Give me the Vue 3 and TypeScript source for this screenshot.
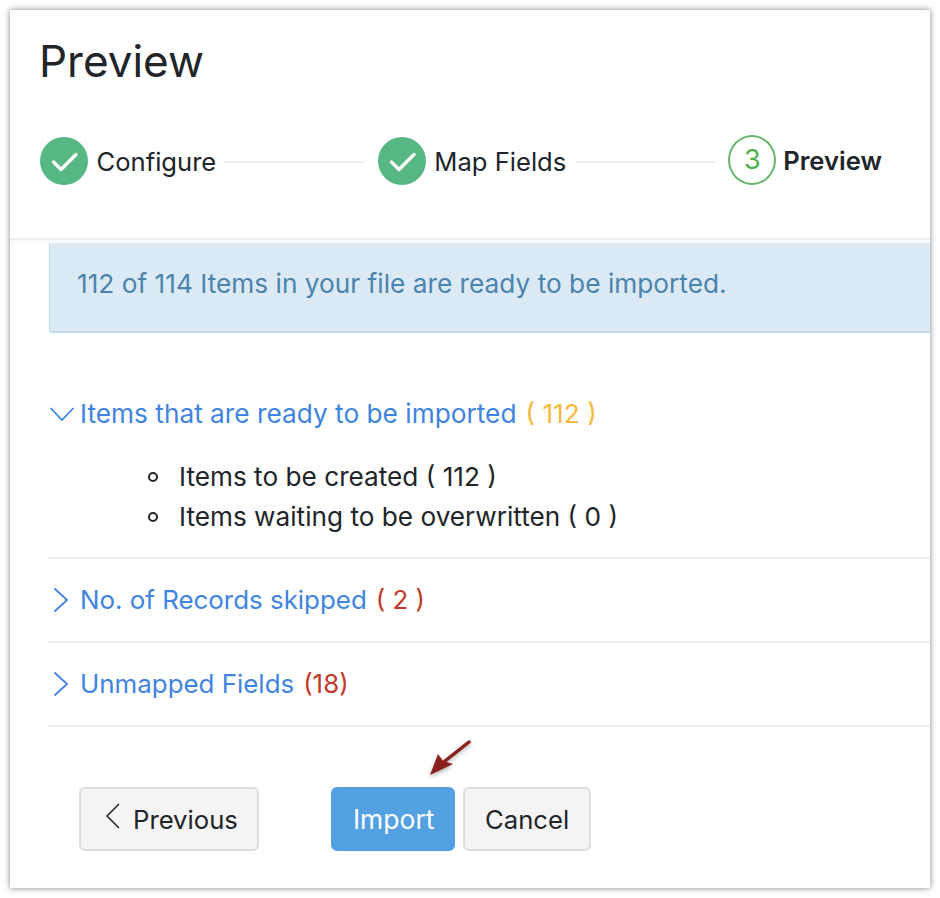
<script setup lang="ts">
import { ref } from 'vue'

// sections of the import summary
const sections = ref([
  { id: 'skipped', label: 'No. of Records skipped', count: '( 2 )' },
  { id: 'unmapped', label: 'Unmapped Fields', count: '(18)' }
])
</script>

<template>
  <div class="page">
    <div class="card">
      <header class="head">
        <h1>Preview</h1>
        <div class="steps">
          <div class="step">
            <svg class="tick" width="48" height="48" viewBox="0 0 48 48">
              <circle cx="24" cy="24" r="24" fill="#57b886" />
              <path d="M13.500 25l7.500 7.500L36 17.500" fill="none" stroke="#fff" stroke-width="3.400" stroke-linecap="round" stroke-linejoin="round" />
            </svg>
            <span>Configure</span>
          </div>
          <div class="line"></div>
          <div class="step">
            <svg class="tick" width="48" height="48" viewBox="0 0 48 48">
              <circle cx="24" cy="24" r="24" fill="#57b886" />
              <path d="M13.500 25l7.500 7.500L36 17.500" fill="none" stroke="#fff" stroke-width="3.400" stroke-linecap="round" stroke-linejoin="round" />
            </svg>
            <span>Map Fields</span>
          </div>
          <div class="line"></div>
          <div class="step current">
            <div class="num">3</div>
            <span>Preview</span>
          </div>
        </div>
      </header>

      <div class="body">
        <div class="alert">112 of 114 Items in your file are ready to be imported.</div>

        <section class="sec open">
          <div class="sec-title">
            <svg class="chev" width="26" height="16" viewBox="0 0 26 16">
              <path d="M1.500 2l11.500 12L24.500 2" fill="none" stroke="#3f84e0" stroke-width="1.800" />
            </svg>
            <span class="link">Items that are ready to be imported</span>
            <span class="amber">( 112 )</span>
          </div>
          <ul>
            <li>Items to be created ( 112 )</li>
            <li>Items waiting to be overwritten ( 0 )</li>
          </ul>
        </section>

        <section v-for="s in sections" :key="s.id" class="sec">
          <div class="sec-title">
            <svg class="chev" width="26" height="26" viewBox="0 0 26 26">
              <path d="M5.500 1.500L18 13 5.500 24.500" fill="none" stroke="#3f84e0" stroke-width="1.800" />
            </svg>
            <span class="link">{{ s.label }}</span>
            <span class="red">{{ s.count }}</span>
          </div>
        </section>

        <div class="actions">
          <button class="btn prev">
            <svg width="16" height="26" viewBox="0 0 16 26">
              <path d="M14 1L2 13l12 12" fill="none" stroke="#212529" stroke-width="1.500" />
            </svg>
            Previous
          </button>
          <button class="btn primary">Import</button>
          <button class="btn">Cancel</button>
          <svg class="arrow" width="46" height="40" viewBox="0 0 46 40">
            <path d="M40 3L11 26" stroke="#8a1f1c" stroke-width="3.500" stroke-linecap="round" fill="none" />
            <path d="M1 36L9 15l5 7 10 3z" fill="#8a1f1c" />
          </svg>
        </div>
      </div>
    </div>
  </div>
</template>

<style>
body {
  background: #fff;
}
</style>

<style scoped>
.page {
  box-sizing: border-box;
  width: 940px;
  height: 898px;
  padding: 10px;
}

.card {
  box-sizing: border-box;
  width: 920px;
  height: 878px;
  background: #fff;
  box-shadow: 0 0 6px rgba(0, 0, 0, 0.5);
  font-family: Inter, "Liberation Sans", sans-serif;
  color: #212529;
  overflow: hidden;
}

.head {
  box-sizing: border-box;
  height: 230px;
  padding: 25px 0 0 30px;
  border-bottom: 2px solid #eeeeee;
  box-shadow: 0 3px 5px rgba(0, 0, 0, 0.03);
}

h1 {
  margin: 0 0 0 -1px;
  font-size: 44px;
  line-height: 52px;
  font-weight: 400;
}

.steps {
  display: flex;
  align-items: flex-start;
  margin-top: 50px;
}

.step {
  display: flex;
  align-items: center;
  gap: 8.500px;
  font-size: 25.600px;
  height: 48px;
}

.line {
  width: 140px;
  height: 2px;
  margin: 24px 13px 0 8.500px;
  background: #eeeeee;
}

.step.current {
  margin-left: 0.500px;
  gap: 7px;
  font-weight: 600;
}

.step.current span {
  position: relative;
  top: -1px;
}

.num {
  box-sizing: border-box;
  width: 48px;
  height: 50px;
  border: 2px solid #6cb56f;
  border-radius: 50%;
  color: #4caf50;
  font-size: 27px;
  font-weight: 400;
  display: flex;
  align-items: center;
  justify-content: center;
  margin-top: -3px;
}

.body {
  padding: 3px 0 0 39px;
}

.alert {
  box-sizing: border-box;
  height: 90px;
  padding: 23px 27px;
  background: #dceaf5;
  border-left: 1px solid #bfe0ec;
  border-bottom: 2px solid #bfe0ec;
  border-bottom-left-radius: 3px;
  color: #4a84ad;
  font-size: 26.250px;
  line-height: 36px;
}

.sec {
  box-sizing: border-box;
  border-bottom: 2px solid #eeeeee;
  height: 84px;
}

.sec.open {
  margin-top: 59px;
  height: 167px;
}

.sec-title {
  box-sizing: content-box;
  display: flex;
  align-items: center;
  gap: 9px;
  height: 44px;
  padding-top: 19px;
  font-size: 25.900px;
  line-height: 44px;
}

.sec.open .sec-title {
  padding-top: 0;
  font-size: 26.250px;
}

.sec-title svg {
  flex: none;
  margin-right: -4px;
}

.link {
  color: #3f84e0;
}

.amber {
  color: #f5b93e;
}

.red {
  color: #c0392b;
}

ul {
  margin: 21px 0 0;
  padding: 0 0 0 99px;
  list-style: none;
  font-size: 26.200px;
  line-height: 40px;
}

li {
  display: flex;
  align-items: center;
  gap: 21px;
}

li::before {
  content: "";
  box-sizing: border-box;
  width: 10px;
  height: 10px;
  border: 2px solid #212529;
  border-radius: 50%;
}

.actions {
  position: relative;
  display: flex;
  gap: 8px;
  margin-top: 60px;
  padding-left: 30px;
}

.btn {
  box-sizing: border-box;
  height: 64px;
  padding: 0 20px;
  border: 2px solid #dedede;
  border-radius: 6px;
  background: #f4f4f4;
  color: #212529;
  font: 400 25.700px Inter, "Liberation Sans", sans-serif;
}

.prev {
  display: flex;
  align-items: center;
  gap: 12px;
  width: 180px;
  padding: 0 0 0 24px;
  margin-right: 64px;
}

.prev svg {
  flex: none;
  margin-top: -7px;
}

.primary {
  width: 124px;
  background: #53a1e2;
  border-color: #53a1e2;
  color: #fff;
  font-size: 26.500px;
}

.arrow {
  position: absolute;
  left: 380px;
  top: -48px;
  filter: drop-shadow(0 2px 2px rgba(0, 0, 0, 0.3));
}
</style>
